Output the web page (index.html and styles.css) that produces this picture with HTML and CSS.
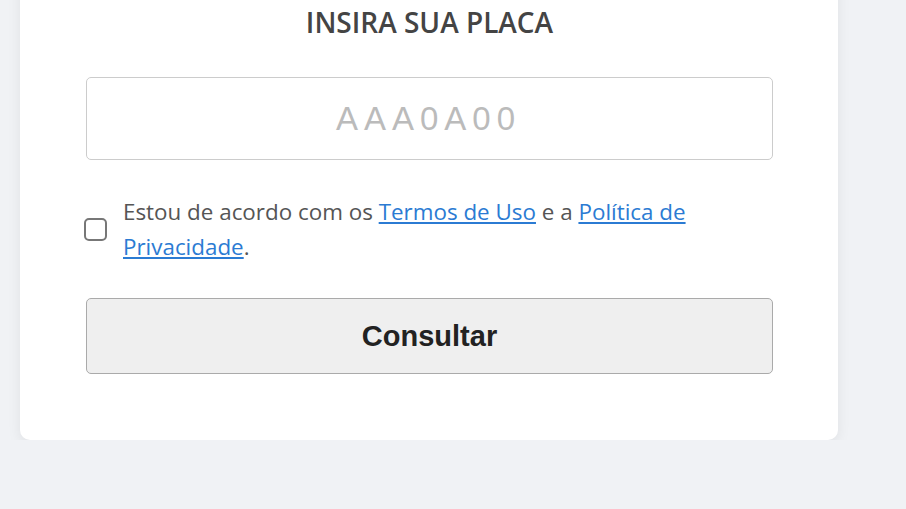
FILE: index.html
```html
<!DOCTYPE html>
<html lang="pt-BR">
<head>
<meta charset="utf-8">
<title>Consulta de placa</title>
<link rel="stylesheet" href="styles.css">
</head>
<body>
<main class="page">
  <section class="card">
    <h2 class="title">INSIRA SUA PLACA</h2>
    <input class="plate" type="text" placeholder="AAA0A00">
    <label class="terms">
      <input class="check" type="checkbox">
      <span class="terms-text">Estou de acordo com os <a href="#">Termos de Uso</a> e a <a href="#">Política de Privacidade</a>.</span>
    </label>
    <button class="submit" type="button">Consultar</button>
  </section>
</main>
</body>
</html>
```

FILE: styles.css
```css
html, body {
  margin: 0;
  padding: 0;
  background: #f0f2f5;
  overflow: hidden;
}
.page {
  padding: 0 20px;
}
.card {
  width: 818px;
  box-sizing: border-box;
  margin-top: -20px;
  padding: 23px 65px 66px 66px;
  background: #fff;
  border-radius: 0 0 10px 10px;
  box-shadow: 0 4px 14px rgba(0, 0, 0, 0.07);
  display: flex;
  flex-direction: column;
}
.title {
  margin: 0;
  font-family: "Open Sans", sans-serif;
  font-weight: 600;
  font-size: 28px;
  line-height: 38px;
  color: #444;
  text-align: center;
}
.plate {
  margin-top: 36px;
  height: 83px;
  box-sizing: border-box;
  border: 1px solid #ccc;
  border-radius: 5px;
  font-family: "Liberation Sans", sans-serif;
  font-size: 33px;
  letter-spacing: 6px;
  text-align: center;
  color: #333;
  outline: none;
  padding: 0 12px 0 10px;
}
.plate::placeholder {
  color: #bbb;
}
.terms {
  margin-top: 34px;
  display: flex;
  align-items: center;
  gap: 16px;
  margin-left: -2px;
}
.check {
  appearance: none;
  -webkit-appearance: none;
  margin: 0;
  flex: none;
  width: 23px;
  height: 23px;
  border: 2px solid #777;
  border-radius: 5px;
  background: #fff;
  box-sizing: border-box;
}
.terms-text {
  font-family: "Open Sans", sans-serif;
  font-size: 22.4px;
  line-height: 35px;
  color: #555;
  max-width: 600px;
}
.terms-text a {
  color: #2b7bd3;
  text-decoration: underline;
}
.submit {
  margin-top: 34px;
  height: 76px;
  background: #efefef;
  border: 1px solid #aaa;
  border-radius: 5px;
  font-family: "Liberation Sans", sans-serif;
  font-weight: 700;
  font-size: 29px;
  color: #222;
}
```
